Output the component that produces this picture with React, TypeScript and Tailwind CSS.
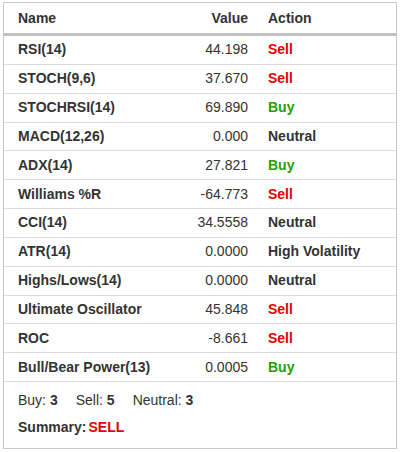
const rows = [
    { name: "RSI(14)", value: "44.198", action: "Sell" },
    { name: "STOCH(9,6)", value: "37.670", action: "Sell" },
    { name: "STOCHRSI(14)", value: "69.890", action: "Buy" },
    { name: "MACD(12,26)", value: "0.000", action: "Neutral" },
    { name: "ADX(14)", value: "27.821", action: "Buy" },
    { name: "Williams %R", value: "-64.773", action: "Sell" },
    { name: "CCI(14)", value: "34.5558", action: "Neutral" },
    { name: "ATR(14)", value: "0.0000", action: "High Volatility" },
    { name: "Highs/Lows(14)", value: "0.0000", action: "Neutral" },
    { name: "Ultimate Oscillator", value: "45.848", action: "Sell" },
    { name: "ROC", value: "-8.661", action: "Sell" },
    { name: "Bull/Bear Power(13)", value: "0.0005", action: "Buy" },
];

function actionColor(action: string) {
    if (action === "Sell") return "text-[#e60000]";
    if (action === "Buy") return "text-[#26a000]";
    return "text-[#333]";
}

export default function App() {
    return (
        <div className="pl-[3px] pt-[2px] bg-white text-[14px] text-[#333] font-['Liberation_Sans',Arial,sans-serif]">
            <div className="w-[394px] border border-[#c8c8c8]">
                <div className="grid grid-cols-[130px_120px_1fr] h-[33px] items-center border-b-[3px] border-[#c2c2c2] font-bold">
                    <div className="pl-[14px]">Name</div>
                    <div className="text-right pr-[6px]">Value</div>
                    <div className="pl-[14px]">Action</div>
                </div>

                {rows.map((row) => (
                    <div
                        key={row.name}
                        className="grid grid-cols-[130px_120px_1fr] h-[28.85px] items-center border-b border-[#dcdcdc]"
                    >
                        <div className="pl-[14px] font-bold whitespace-nowrap">{row.name}</div>
                        <div className="text-right pr-[6px]">{row.value}</div>
                        <div className={`pl-[14px] font-bold whitespace-nowrap ${actionColor(row.action)}`}>
                            {row.action}
                        </div>
                    </div>
                ))}

                <div className="pl-[14px] pt-[8px] pb-[11px] flex flex-col gap-[7px] leading-[20px]">
                    <div className="flex gap-[18px]">
                        <span>Buy: <b>3</b></span>
                        <span>Sell: <b>5</b></span>
                        <span>Neutral: <b>3</b></span>
                    </div>
                    <div className="font-bold">
                        Summary:<span className="ml-[2px] text-[#e60000]">SELL</span>
                    </div>
                </div>
            </div>
        </div>
    )
}
